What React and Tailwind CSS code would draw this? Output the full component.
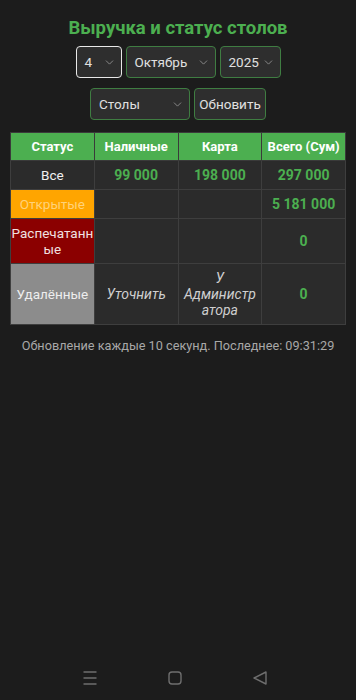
import React from 'react';
import { ChevronDown } from 'lucide-react';

const font = { fontFamily: 'Roboto, "Noto Sans", sans-serif' };

const Select = ({ value, width, focused }) => (
  <div
    className={`${width} h-[32px] flex items-center justify-between pl-[8px] pr-[5px] rounded-[4px] bg-[#2e2e2e] text-[#e0e0e0] text-[13.5px] border ${focused ? 'border-[#e8e8e8] border-[1.5px]' : 'border-[#3f7d42]'}`}
  >
    <span>{value}</span>
    <ChevronDown size={13} strokeWidth={1.5} className="text-[#9a9a9a]" />
  </div>
);

const rows = [
  { label: 'Все', cls: 'bg-[#2b2b2b] text-[#f0f0f0]', cash: '99 000', card: '198 000', total: '297 000' },
  { label: 'Открытые', cls: 'bg-[#ffa500] text-[#ffd27a]', cash: '', card: '', total: '5 181 000' },
  { label: 'Распечатанные', cls: 'bg-[#8b0000] text-[#f0e0e0]', cash: '', card: '', total: '0' },
  { label: 'Удалённые', cls: 'bg-[#8c8c8c] text-[#eeeeee]', cash: 'Уточнить', card: 'У Администратора', total: '0', italic: true },
];

const cell = 'border border-[#3e3e3e] py-[6px] leading-[16px] text-center [overflow-wrap:anywhere]';

export default function App() {
  return (
    <div className="w-[356px] h-[700px] bg-[#1c1c1c] flex flex-col items-center" style={font}>
      <h1 className="mt-[15px] text-[18.5px] leading-[26px] font-bold text-[#4caf50]">Выручка и статус столов</h1>

      <div className="mt-[5px] flex gap-[4px]">
        <Select value="4" width="w-[46px]" focused />
        <Select value="Октябрь" width="w-[90px]" />
        <Select value="2025" width="w-[61px]" />
      </div>

      <div className="mt-[10px] flex gap-[4px]">
        <Select value="Столы" width="w-[100px]" />
        <button className="w-[72px] h-[32px] rounded-[4px] bg-[#2e2e2e] border border-[#3f7d42] text-[#e0e0e0] text-[13.5px] px-0">
          Обновить
        </button>
      </div>

      <table className="mt-[12px] w-[336px] table-fixed border-collapse text-[14px]">
        <thead>
          <tr className="bg-[#4caf50] text-white text-[13px] font-bold">
            {['Статус', 'Наличные', 'Карта', 'Всего (Сум)'].map((h) => (
              <th key={h} className="h-[28px] border border-[#3a3a3a] px-[2px] text-center font-bold">{h}</th>
            ))}
          </tr>
        </thead>
        <tbody>
          {rows.map((r) => (
            <tr key={r.label}>
              <td className={`${r.cls} ${cell} px-0 text-[13.5px]`}>{r.label}</td>
              <td className={`bg-[#2b2b2b] ${cell} px-[3px] ${r.italic ? 'italic text-[#cfcfcf] font-normal' : 'text-[#4caf50] font-bold'}`}>{r.cash}</td>
              <td className={`bg-[#2b2b2b] ${cell} px-[3px] ${r.italic ? 'italic text-[#cfcfcf] font-normal' : 'text-[#4caf50] font-bold'}`}>{r.card}</td>
              <td className={`bg-[#2b2b2b] ${cell} px-[3px] text-[#4caf50] font-bold`}>{r.total}</td>
            </tr>
          ))}
        </tbody>
      </table>

      <p className="mt-[11px] text-[12.7px] text-[#a8a8a8]">Обновление каждые 10 секунд. Последнее: 09:31:29</p>

      <div className="mt-auto mb-[12px] w-full flex justify-center gap-[65px] pr-[6px] text-[#6e6e6e]">
        <svg width="20" height="20" viewBox="0 0 20 20" fill="none" stroke="currentColor" strokeWidth="1.4">
          <path d="M3.5 4h13M3.5 10h13M3.5 16h13" />
        </svg>
        <svg width="20" height="20" viewBox="0 0 20 20" fill="none" stroke="currentColor" strokeWidth="1.4">
          <rect x="4" y="4" width="12" height="12" rx="3" />
        </svg>
        <svg width="20" height="20" viewBox="0 0 20 20" fill="none" stroke="currentColor" strokeWidth="1.4" strokeLinejoin="round">
          <path d="M16 4v12L4 10z" />
        </svg>
      </div>
    </div>
  );
}
